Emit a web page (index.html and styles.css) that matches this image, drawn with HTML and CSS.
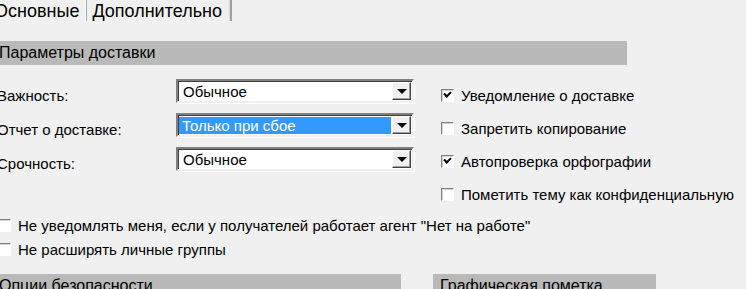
FILE: index.html
```html
<!DOCTYPE html>
<html lang="ru">
<head>
    <meta charset="UTF-8">
    <title>Параметры сообщения</title>
    <link rel="stylesheet" href="styles.css">
</head>
<body>
<div class="page">
    <div class="tabs">
        <div class="tab active">Основные</div>
        <div class="tab">Дополнительно</div>
    </div>

    <div class="section-head wide">Параметры доставки</div>

    <div class="options">
        <div class="fields">
            <div class="field">
                <span class="label">Важность:</span>
                <div class="combo"><span class="value">Обычное</span><span class="arrow"></span></div>
            </div>
            <div class="field">
                <span class="label">Отчет о доставке:</span>
                <div class="combo"><span class="value selected">Только при сбое</span><span class="arrow"></span></div>
            </div>
            <div class="field">
                <span class="label">Срочность:</span>
                <div class="combo"><span class="value">Обычное</span><span class="arrow"></span></div>
            </div>
        </div>
        <div class="checks">
            <label class="check"><span class="box checked"></span>Уведомление о доставке</label>
            <label class="check"><span class="box"></span>Запретить копирование</label>
            <label class="check"><span class="box checked"></span>Автопроверка орфографии</label>
            <label class="check"><span class="box"></span>Пометить тему как конфиденциальную</label>
        </div>
    </div>

    <div class="extra">
        <label class="check"><span class="box"></span>Не уведомлять меня, если у получателей работает агент "Нет на работе"</label>
        <label class="check"><span class="box"></span>Не расширять личные группы</label>
    </div>

    <div class="bottom">
        <div class="section-head security">Опции безопасности</div>
        <div class="section-head mark">Графическая пометка</div>
    </div>
</div>
</body>
</html>
```

FILE: styles.css
```css
body {
    margin: 0;
    background: #f0f0f0;
    font-family: 'Liberation Sans', Arial, sans-serif;
    font-size: 15px;
    color: #000;
    overflow: hidden;
}

.page {
    margin-left: -3px;
}

.tabs {
    display: flex;
    height: 21px;
}

.tab {
    font-size: 18px;
    line-height: 20px;
    padding-top: 1px;
}

.tab.active {
    margin-left: -3px;
    padding-right: 6px;
}

.tab + .tab {
    border-left: 1px solid #fff;
    border-right: 2px solid #a0a0a0;
    padding: 1px 8px 0 6px;
    box-shadow: inset 1px 0 0 #a8a8a8, inset -1px 0 0 #d8d8d8;
}

.section-head {
    background: #b9b9b9;
    height: 24px;
    line-height: 24px;
    font-size: 16px;
    padding-left: 2px;
}

.section-head.wide {
    width: 628px;
    margin-top: 20px;
}

.options {
    display: flex;
    margin-top: 14px;
}

.fields {
    display: flex;
    flex-direction: column;
    gap: 10px;
    width: 444px;
}

.field {
    display: flex;
    align-items: center;
    height: 24px;
}

.label {
    width: 179px;
    padding-top: 9px;
}

.combo {
    display: flex;
    width: 234px;
    height: 20px;
    background: #fff;
    border: 2px solid;
    border-color: #808080 #f0f0f0 #f0f0f0 #808080;
    box-shadow: inset 1px 1px 0 #404040, 1px 1px 0 #fff;
}

.value {
    flex: 1;
    padding-left: 3px;
    margin: 2px 1px 1px 2px;
    line-height: 18px;
}

.value.selected {
    background: #3399ff;
    color: #fff;
    margin-left: 1px;
    padding-left: 3px;
}

.arrow {
    width: 17px;
    margin: 1px 1px 1px 0;
    background: #f0f0f0;
    border: 1px solid;
    border-color: #fff #404040 #404040 #fff;
    box-shadow: inset -1px -1px 0 #a0a0a0;
    display: flex;
    align-items: center;
    justify-content: center;
}

.arrow::after {
    content: "";
    border-left: 5px solid transparent;
    border-right: 5px solid transparent;
    border-top: 5px solid #000;
    margin-top: 1px;
}

.checks {
    display: flex;
    flex-direction: column;
    gap: 13px;
    padding-top: 6px;
}

.check {
    display: flex;
    align-items: center;
    height: 20px;
    white-space: nowrap;
}

.box {
    width: 11px;
    height: 11px;
    margin-right: 7px;
    background: #fff;
    border: 1px solid;
    border-color: #808080 #fff #fff #808080;
    box-shadow: inset 1px 1px 0 #d4d4d4;
    position: relative;
}

.box.checked::after {
    content: "";
    position: absolute;
    left: 2px;
    top: 1px;
    width: 5px;
    height: 3px;
    border-left: 2px solid #000;
    border-bottom: 2px solid #000;
    transform: rotate(-45deg);
}

.extra {
    display: flex;
    flex-direction: column;
    gap: 4px;
    margin-top: 11px;
    margin-left: 1px;
}

.bottom {
    display: flex;
    gap: 32px;
    margin-top: 15px;
}

.section-head.security {
    width: 402px;
}

.section-head.mark {
    width: 216px;
    padding-left: 7px;
}
```
